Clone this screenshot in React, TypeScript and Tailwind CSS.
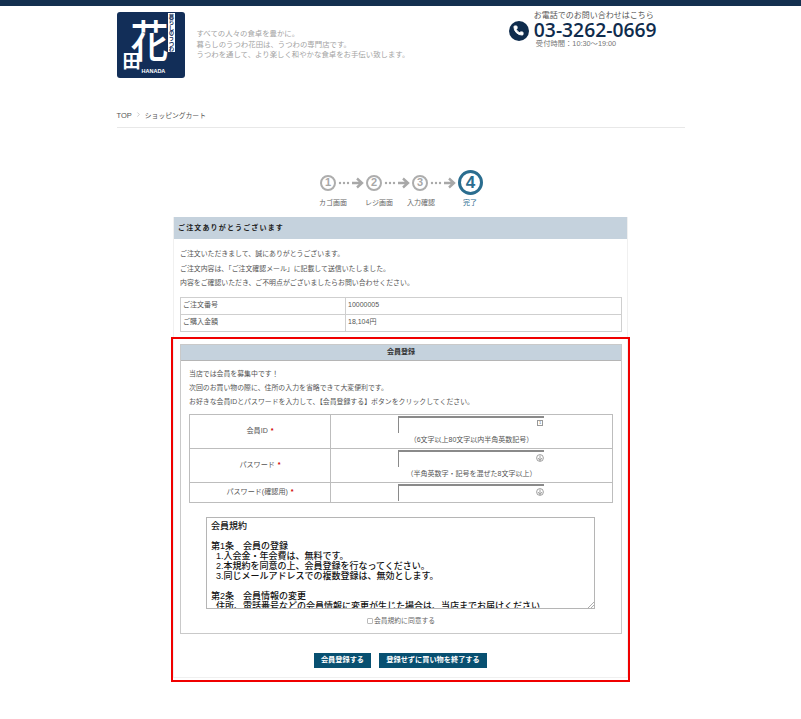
import { Phone, ChevronRight } from 'lucide-react';

const jp = { fontFamily: '"Liberation Sans", "Noto Sans CJK JP", sans-serif' };

function Logo() {
  return (
    <div className="relative h-[66px] w-[68px] shrink-0 overflow-hidden rounded-[3px] bg-[#122e58] text-white">
      <span
        className="absolute left-[14px] top-[4px] origin-top scale-y-[1.18] text-[38px] font-medium leading-[40px]"
        style={{ fontFamily: '"Noto Sans CJK JP", sans-serif' }}
      >
        花
      </span>
      <span className="absolute left-[6px] top-[40px] text-[18px] font-bold leading-[20px]">田</span>
      <span
        className="absolute left-[51px] top-[1px] h-[39px] w-[7px] bg-white text-center text-[5.4px] font-bold leading-[7px] text-[#122e58]"
        style={{ writingMode: 'vertical-rl' }}
      >
        暮らしのうつわ
      </span>
      <span className="absolute left-[25px] top-[56px] text-[5.5px] font-bold leading-[6px]">HANADA</span>
    </div>
  );
}

function StepArrow() {
  return (
    <svg width="26" height="12" viewBox="0 0 26 12" className="mx-[2px] text-[#a8a8a8]">
      <circle cx="2" cy="6" r="1.2" fill="currentColor" />
      <circle cx="6" cy="6" r="1.2" fill="currentColor" />
      <circle cx="10" cy="6" r="1.2" fill="currentColor" />
      <path d="M14 6h9M19 1.5 24 6l-5 4.5" fill="none" stroke="currentColor" strokeWidth="2.4" />
    </svg>
  );
}

function StepCircle({ n }: { n: number }) {
  return (
    <div className="flex h-[16px] w-[16px] items-center justify-center rounded-full border-2 border-[#adadad] text-[11px] font-bold leading-none text-[#a8a8a8]">
      {n}
    </div>
  );
}

function Required() {
  return <span className="ml-[3px] font-bold text-[#d00000]">*</span>;
}

function PasswordInput({ icon }: { icon: 'key' | 'arrow' }) {
  return (
    <div className="relative ml-[67px] h-[17px] w-[146px] border-l border-t-2 border-l-[#8a8a8a] border-t-[#8a8a8a]">
      {icon === 'key' ? (
        <div className="absolute right-[1px] top-[2px] flex h-[6px] w-[6px] items-center justify-center border border-[#999] text-[4px] leading-none text-[#666]">
          1
        </div>
      ) : (
        <svg width="8" height="8" viewBox="0 0 8 8" className="absolute right-0 top-[2px] text-[#888]">
          <circle cx="4" cy="4" r="3.4" fill="none" stroke="currentColor" strokeWidth="0.8" />
          <path d="M4 1.5v5M2 4l2 2.5L6 4" fill="none" stroke="currentColor" strokeWidth="0.8" />
        </svg>
      )}
    </div>
  );
}

export default function App() {
  return (
    <div className="relative h-[719px] overflow-hidden bg-white text-[#555]" style={jp}>
      <div className="h-[6px] bg-[#14304f]" />

      <div className="mx-auto w-[568px]">
        <header className="flex h-[88px] pt-[6px]">
          <Logo />
          <div className="ml-[12px] pt-[17px] text-[7.4px] leading-[10.5px] text-[#a3a3a3]">
            <p>すべての人々の食卓を豊かに。</p>
            <p>暮らしのうつわ花田は、うつわの専門店です。</p>
            <p>うつわを通して、より楽しく和やかな食卓をお手伝い致します。</p>
          </div>
          <div className="-mt-[1px] ml-auto mr-[28px] flex items-center self-start">
            <div className="mr-[5px] mt-[2px] flex h-[20px] w-[20px] items-center justify-center rounded-full bg-[#0f2c4d]">
              <Phone size={11} className="fill-white text-white" />
            </div>
            <div>
              <p className="text-[8px] leading-[10px] text-[#555]">お電話でのお問い合わせはこちら</p>
              <p className="text-[19.3px] font-semibold leading-[18px] text-[#0f2c4d]" style={{ fontFamily: '"Open Sans", sans-serif' }}>
                03-3262-0669
              </p>
              <p className="ml-[2px] text-[7.3px] leading-[9px] text-[#777]">受付時間：10:30～19:00</p>
            </div>
          </div>
        </header>

        <nav className="flex h-[34px] items-center border-b border-[#e8e8e8] pt-[11px] text-[6.8px] text-[#555]">
          <span className="text-[7.5px]">TOP</span>
          <ChevronRight size={7} className="mx-[3px] mb-[3px] text-[#aaa]" />
          <span>ショッピングカート</span>
        </nav>
      </div>

      <div className="mx-auto mt-[42px] w-[455px]">
        <div className="ml-[147px] flex items-center">
          <StepCircle n={1} />
          <StepArrow />
          <StepCircle n={2} />
          <StepArrow />
          <StepCircle n={3} />
          <StepArrow />
          <div className="flex h-[25px] w-[25px] items-center justify-center rounded-full border-[3px] border-[#2a6d8f] text-[17px] font-bold leading-none text-[#2a6d8f]">
            4
          </div>
        </div>
        <div className="ml-[146px] mt-[3px] flex h-[10px] items-center text-[7px] leading-[10px] text-[#666]">
          <span className="w-[46px]">カゴ画面</span>
          <span className="w-[42px]">レジ画面</span>
          <span className="w-[56px]">入力確認</span>
          <span className="text-[#2a6d8f]">完了</span>
        </div>

        <section className="relative mt-[9px] border-x border-[#f0f0f0]">
          <h2 className="flex h-[22px] items-center bg-[#c5d2dd] pl-[4px] text-[7px] font-bold tracking-[1.15px] text-[#222]">
            ご注文ありがとうございます
          </h2>
          <div className="px-[6px] pt-[8px] text-[6.9px] leading-[14.5px] text-[#555]">
            <p>ご注文いただきまして、誠にありがとうございます。</p>
            <p>ご注文内容は、「ご注文確認メール」に記載して送信いたしました。</p>
            <p>内容をご確認いただき、ご不明点がございましたらお問い合わせください。</p>
          </div>

          <table className="mx-[6px] mt-[6px] w-[442px] table-fixed border-collapse text-[7px] text-[#555]">
            <tbody>
              <tr className="h-[17px]">
                <td className="w-[165px] border border-[#cfcfcf] pl-[2px]">ご注文番号</td>
                <td className="border border-[#cfcfcf] pl-[2px]">10000005</td>
              </tr>
              <tr className="h-[17px]">
                <td className="border border-[#cfcfcf] pl-[2px]">ご購入金額</td>
                <td className="border border-[#cfcfcf] pl-[2px]">18,104円</td>
              </tr>
            </tbody>
          </table>

          <div className="mx-[6px] mt-[12px] h-[290px] w-[442px] border border-[#c9c9c9]">
            <h3 className="flex h-[16px] items-center justify-center border-b border-[#b5b5b5] bg-[#c5d2dd] text-[7px] font-bold text-[#333]">
              会員登録
            </h3>
            <div className="px-[8px] pt-[6px] text-[6.9px] leading-[14px] text-[#555]">
              <p>当店では会員を募集中です！</p>
              <p>次回のお買い物の際に、住所の入力を省略できて大変便利です。</p>
              <p>お好きな会員IDとパスワードを入力して、【会員登録する】ボタンをクリックしてください。</p>
            </div>

            <table className="ml-[8px] mt-[5px] w-[424px] table-fixed border-collapse text-[7.1px] text-[#555]">
              <tbody>
                <tr className="h-[34px]">
                  <td className="w-[141px] border border-[#bdbdbd] text-center">
                    会員ID
                    <Required />
                  </td>
                  <td className="border border-[#bdbdbd] align-top pt-[1px]">
                    <PasswordInput icon="key" />
                    <p className="mt-[1px] text-center text-[7px] leading-[11px]">（6文字以上80文字以内半角英数記号）</p>
                  </td>
                </tr>
                <tr className="h-[34px]">
                  <td className="border border-[#bdbdbd] text-center">
                    パスワード
                    <Required />
                  </td>
                  <td className="border border-[#bdbdbd] align-top pt-[1px]">
                    <PasswordInput icon="arrow" />
                    <p className="mt-[1px] text-center text-[7px] leading-[11px]">（半角英数字・記号を混ぜた8文字以上）</p>
                  </td>
                </tr>
                <tr className="h-[20px]">
                  <td className="border border-[#bdbdbd] text-center">
                    パスワード(確認用)
                    <Required />
                  </td>
                  <td className="border border-[#bdbdbd] align-top pt-[1px]">
                    <PasswordInput icon="arrow" />
                  </td>
                </tr>
              </tbody>
            </table>

            <div className="relative ml-[25px] mt-[14px] h-[92px] w-[389px] overflow-hidden border border-[#b5b5b5] pl-[4px] pt-[3px] text-[9px] font-medium leading-[10px] text-[#111]">
              <p>会員規約</p>
              <p>&nbsp;</p>
              <p>第1条　会員の登録</p>
              <p>&nbsp;&nbsp;1.入会金・年会費は、無料です。</p>
              <p>&nbsp;&nbsp;2.本規約を同意の上、会員登録を行なってください。</p>
              <p>&nbsp;&nbsp;3.同じメールアドレスでの複数登録は、無効とします。</p>
              <p>&nbsp;</p>
              <p>第2条　会員情報の変更</p>
              <p>&nbsp;&nbsp;住所、電話番号などの会員情報に変更が生じた場合は、当店までお届けください</p>
              <svg width="7" height="7" viewBox="0 0 7 7" className="absolute bottom-0 right-0 text-[#999]">
                <path d="M1 7 7 1M4 7l3-3" stroke="currentColor" strokeWidth="0.8" />
              </svg>
            </div>

            <div className="mt-[7px] flex items-center justify-center text-[6.8px] leading-[10px] text-[#666]">
              <span className="mr-[1px] h-[6px] w-[6px] rounded-[1px] border border-[#bbb]" />
              会員規約に同意する
            </div>
          </div>

          <div className="ml-[140px] mt-[19px] flex gap-[8px] pb-[9px] text-[7.2px] font-bold text-white">
            <div className="flex h-[15px] w-[57px] items-center justify-center bg-[#085071]">会員登録する</div>
            <div className="flex h-[15px] w-[108px] items-center justify-center bg-[#085071]">登録せずに買い物を終了する</div>
          </div>
          <div className="border-b border-[#f0f0f0]" />

          <div className="pointer-events-none absolute left-[-3px] top-[120px] h-[345px] w-[459px] border-2 border-[#f00000]" />
        </section>
      </div>
    </div>
  );
}
